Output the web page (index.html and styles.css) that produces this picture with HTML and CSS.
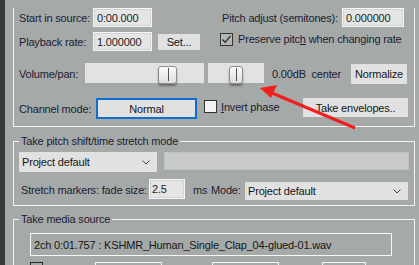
FILE: index.html
```html
<!DOCTYPE html>
<html lang="en">
<head>
    <meta charset="UTF-8">
    <title>Media Item Properties</title>
    <link rel="stylesheet" href="styles.css">
</head>
<body>
    <div class="window">
        <div class="strip"></div>

        <div class="panel">
            <!-- Take properties -->
            <div class="group props">
                <div class="row row-top">
                    <span class="label w-start">Start in source:</span>
                    <span class="field f-start">0:00.000</span>
                    <span class="label w-pitch">Pitch adjust (semitones):</span>
                    <span class="field f-pitch">0.000000</span>
                </div>
                <div class="row row-rate">
                    <span class="label w-start">Playback rate:</span>
                    <span class="field f-start">1.000000</span>
                    <span class="button b-set">Set...</span>
                    <span class="check checked c-preserve">
                        <svg width="11" height="11" viewBox="0 0 11 11"><polyline points="1.5,5.5 4.2,8.3 9.5,2" fill="none" stroke="#2b2b2b" stroke-width="1.3"/></svg>
                    </span>
                    <span class="label">Preserve pitc<u>h</u> when changing rate</span>
                </div>
                <div class="row row-vol">
                    <span class="label w-vol">Volume/pan:</span>
                    <div class="track t-vol"><span class="knob k-vol"></span></div>
                    <div class="track t-pan"><span class="knob k-pan"></span></div>
                    <span class="label w-db">0.00dB&nbsp; center</span>
                    <span class="button b-norm">Normalize</span>
                </div>
                <div class="row row-chan">
                    <span class="label w-chan">Channel mode:</span>
                    <span class="button b-normal">Normal</span>
                    <span class="check c-invert"></span>
                    <span class="label"><u>I</u>nvert phase</span>
                    <span class="button b-env">Take envelopes..</span>
                </div>
            </div>

            <!-- Pitch shift mode -->
            <fieldset class="group box">
                <legend>Take pitch shift/time stretch mode</legend>
                <div class="row row-mode">
                    <span class="combo c-shift">Project default
                        <svg class="chev" width="8" height="5" viewBox="0 0 8 5"><polyline points="0.5,0.5 4,4 7.5,0.5" fill="none" stroke="#444" stroke-width="1"/></svg>
                    </span>
                    <span class="field disabled"></span>
                </div>
                <div class="row row-fade">
                    <span class="label w-fade">Stretch markers: fade size:</span>
                    <span class="field f-fade">2.5</span>
                    <span class="label w-ms">ms</span>
                    <span class="label w-mode">Mode:</span>
                    <span class="combo c-mode">Project default
                        <svg class="chev" width="8" height="5" viewBox="0 0 8 5"><polyline points="0.5,0.5 4,4 7.5,0.5" fill="none" stroke="#444" stroke-width="1"/></svg>
                    </span>
                </div>
            </fieldset>

            <!-- Media source -->
            <fieldset class="group box">
                <legend>Take media source</legend>
                <div class="source">2ch 0:01.757 : KSHMR_Human_Single_Clap_04-glued-01.wav</div>
                <div class="row row-bottom">
                    <span class="check c-dark"></span>
                    <span class="outline o-1"></span>
                    <span class="outline o-2"></span>
                    <span class="outline o-3"></span>
                </div>
            </fieldset>
        </div>

        <!-- Annotation arrow -->
        <svg class="arrow" width="419" height="265" viewBox="0 0 419 265">
            <line x1="355" y1="128" x2="272" y2="93" stroke="#f21d1d" stroke-width="3"/>
            <polygon points="260,88 277,85 271,98" fill="#f21d1d"/>
        </svg>
    </div>
</body>
</html>
```

FILE: styles.css
```css
* {
    margin: 0;
    padding: 0;
    box-sizing: border-box;
}

body {
    background-color: #a5aaa9;
    font-family: "Liberation Sans", Arial, sans-serif;
    font-size: 11px;
    letter-spacing: -0.18px;
    color: #1c1b33;
}

.window {
    position: relative;
    display: flex;
    width: 419px;
    height: 265px;
    overflow: hidden;
}

.strip {
    width: 5px;
    flex-shrink: 0;
    background-color: #3a3a3a;
}

.panel {
    width: 402px;
    margin-left: 8px;
}

/* Group boxes */
.group {
    border: 1px solid #f4f4f4;
    padding: 0 5px;
}

.props {
    border-top: none;
    padding-bottom: 7px;
}

.box {
    min-width: 0;
    margin-top: 8px;
    padding-bottom: 5px;
}

.box + .box {
    margin-top: 7px;
}

legend {
    padding: 0 2px;
    line-height: 13px;
}

.row {
    display: flex;
    align-items: center;
}

.label {
    white-space: nowrap;
    flex-shrink: 0;
}

/* Inputs and buttons */
.field {
    display: flex;
    align-items: center;
    height: 19px;
    padding-left: 3px;
    background-color: #e4e5e4;
    border: 1px solid #f7f7f7;
    box-shadow: inset 0 0 0 1px #d2d4d3;
    color: #232323;
}

.button {
    display: flex;
    align-items: center;
    justify-content: center;
    background-color: #e1e1e1;
    color: #151515;
}

.combo {
    position: relative;
    display: flex;
    align-items: center;
    padding-left: 3px;
    background-color: #e1e1e1;
    color: #151515;
}

.chev {
    position: absolute;
    right: 7px;
    top: 8px;
}

.check {
    display: flex;
    align-items: center;
    justify-content: center;
    width: 13px;
    height: 13px;
    flex-shrink: 0;
    border: 1px solid #333;
    background-color: #f2f2f2;
}

.check.checked {
    background-color: #b3b8b7;
}

/* Row 1 */
.row-top {
    margin-top: 8px;
    height: 19px;
}

.w-start {
    width: 74px;
}

.f-start {
    width: 59px;
}

.w-pitch {
    width: 120px;
    margin-left: 70px;
}

.f-pitch {
    width: 62px;
}

/* Row 2 */
.row-rate {
    margin-top: 5px;
    height: 19px;
}

.b-set {
    width: 42px;
    height: 16px;
    margin-left: 6px;
}

.c-preserve {
    margin-left: 20px;
    margin-right: 5px;
    margin-top: -5px;
}

.row-rate .c-preserve + .label {
    margin-top: -5px;
}

/* Row 3 - volume and pan */
.row-vol {
    margin-top: 12px;
    height: 21px;
}

.w-vol {
    width: 66px;
}

.track {
    position: relative;
    height: 20px;
    align-self: flex-start;
    background-color: #e2e2e2;
}

.t-vol {
    width: 119px;
}

.t-pan {
    width: 56px;
    margin-left: 4px;
}

.knob {
    position: absolute;
    top: 3px;
    height: 18px;
    border: 1px solid #8c8c8c;
    border-radius: 3px;
    background: linear-gradient(#fbfbfb, #dedede);
    box-shadow: 0 2px 2px rgba(0, 0, 0, 0.35);
}

.knob::after {
    content: "";
    position: absolute;
    left: 50%;
    top: 1px;
    bottom: 2px;
    width: 1px;
    background-color: #555;
}

.k-vol {
    left: 73px;
    width: 19px;
}

.k-pan {
    left: 21px;
    width: 14px;
}

.w-db {
    width: 79px;
    margin-left: 8px;
}

.b-norm {
    width: 56px;
    height: 20px;
}

/* Row 4 - channel mode */
.row-chan {
    margin-top: 14px;
    height: 21px;
}

.w-chan {
    width: 77px;
}

.b-normal {
    width: 101px;
    height: 21px;
    border: 2px solid #0c6fd1;
}

.c-invert {
    margin-left: 7px;
    margin-right: 4px;
    margin-top: -4px;
}

.row-chan .c-invert + .label {
    margin-top: -4px;
}

.b-env {
    width: 105px;
    height: 19px;
    margin-left: auto;
    margin-right: 1px;
    align-self: flex-start;
}

/* Pitch shift group */
.row-mode {
    margin-top: 4px;
    align-items: flex-start;
}

.c-shift {
    width: 138px;
    height: 20px;
}

.disabled {
    width: 245px;
    height: 18px;
    margin-left: 7px;
    background-color: #c9cbca;
    border: 1px solid #bfc2c1;
    box-shadow: none;
}

.row-fade {
    margin-top: 7px;
    height: 21px;
}

.w-fade {
    width: 128px;
    margin-left: 2px;
}

.f-fade {
    width: 36px;
    height: 20px;
    padding-left: 2px;
    align-self: flex-start;
}

.w-ms {
    width: 18px;
    margin-left: 8px;
}

.w-mode {
    width: 34px;
}

.c-mode {
    width: 163px;
    height: 18px;
    align-self: flex-end;
}

.c-mode .chev {
    top: 7px;
}

/* Media source group */
.source {
    display: flex;
    align-items: center;
    width: 362px;
    height: 23px;
    margin: 7px 0 0 11px;
    padding-left: 3px;
    border: 1px solid #f7f7f7;
    color: #151515;
}

.row-bottom {
    margin-top: 6px;
    align-items: flex-start;
}

.c-dark {
    margin-left: 11px;
    border-color: #2a2a2a;
    background-color: #a5aaa9;
}

.outline {
    height: 20px;
    border: 1px solid #f7f7f7;
}

.o-1 {
    width: 67px;
    margin-left: 52px;
}

.o-2 {
    width: 67px;
    margin-left: 50px;
}

.o-3 {
    width: 44px;
    margin-left: 43px;
}

/* Annotation overlay */
.arrow {
    position: absolute;
    left: 0;
    top: 0;
    pointer-events: none;
}
```
